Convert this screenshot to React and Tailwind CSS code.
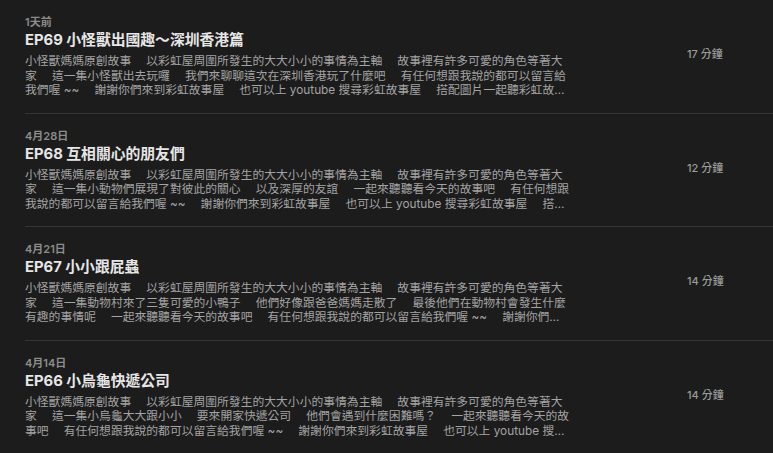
import React from "react";

const SP = "\u3000 ";
const INTRO = `小怪獸媽媽原創故事${SP}以彩虹屋周圍所發生的大大小小的事情為主軸${SP}故事裡有許多可愛的角色等著大家${SP}`;

const episodes = [
  {
    date: "1天前",
    title: "EP69 小怪獸出國趣～深圳香港篇",
    desc: `${INTRO}這一集小怪獸出去玩囉${SP}我們來聊聊這次在深圳香港玩了什麼吧${SP}有任何想跟我說的都可以留言給我們喔 ~~${SP}謝謝你們來到彩虹故事屋${SP}也可以上 youtube 搜尋彩虹故事屋${SP}搭配圖片一起聽彩虹故事屋的故事喔`,
    duration: "17 分鐘",
  },
  {
    date: "4月28日",
    title: "EP68 互相關心的朋友們",
    desc: `${INTRO}這一集小動物們展現了對彼此的關心${SP}以及深厚的友誼${SP}一起來聽聽看今天的故事吧${SP}有任何想跟我說的都可以留言給我們喔 ~~${SP}謝謝你們來到彩虹故事屋${SP}也可以上 youtube 搜尋彩虹故事屋${SP}搭配圖片一起聽彩虹故事屋的故事喔`,
    duration: "12 分鐘",
  },
  {
    date: "4月21日",
    title: "EP67 小小跟屁蟲",
    desc: `${INTRO}這一集動物村來了三隻可愛的小鴨子${SP}他們好像跟爸爸媽媽走散了${SP}最後他們在動物村會發生什麼有趣的事情呢${SP}一起來聽聽看今天的故事吧${SP}有任何想跟我說的都可以留言給我們喔 ~~${SP}謝謝你們來到彩虹故事屋${SP}也可以上 youtube 搜尋彩虹故事屋`,
    duration: "14 分鐘",
  },
  {
    date: "4月14日",
    title: "EP66 小烏龜快遞公司",
    desc: `${INTRO}這一集小烏龜大大跟小小${SP}要來開家快遞公司${SP}他們會遇到什麼困難嗎？${SP}一起來聽聽看今天的故事吧${SP}有任何想跟我說的都可以留言給我們喔 ~~${SP}謝謝你們來到彩虹故事屋${SP}也可以上 youtube 搜尋彩虹故事屋${SP}搭配圖片一起聽`,
    duration: "14 分鐘",
  },
];

const EpisodeRow = ({ ep }) => (
  <div className="flex border-b border-[#353535]">
    <div className="flex-1 pt-[15px] pb-[15px]">
      <p className="text-[11px] leading-[14px] font-semibold text-[#8c8c8c]">
        {ep.date}
      </p>
      <h3 className="mt-[1px] text-[14.8px] leading-[20px] font-bold text-[#e6e6e6]">
        {ep.title}
      </h3>
      <p className="mt-[4px] w-[545px] text-[11.8px] leading-[14.5px] text-[#a3a3a3] line-clamp-3">
        {ep.desc}
      </p>
    </div>
    <div className="w-[86px] shrink-0 pt-[47px] text-[11px] leading-[14px] font-medium text-[#9a9a9a]">
      {ep.duration}
    </div>
  </div>
);

export default function App() {
  return (
    <div
      className="min-h-screen w-full overflow-hidden bg-[#1c1c1c]"
      style={{ fontFamily: '"Inter", "Noto Sans CJK TC", sans-serif' }}
    >
      <div className="ml-[25px]">
        {episodes.map((ep) => (
          <EpisodeRow key={ep.title} ep={ep} />
        ))}
      </div>
    </div>
  );
}
